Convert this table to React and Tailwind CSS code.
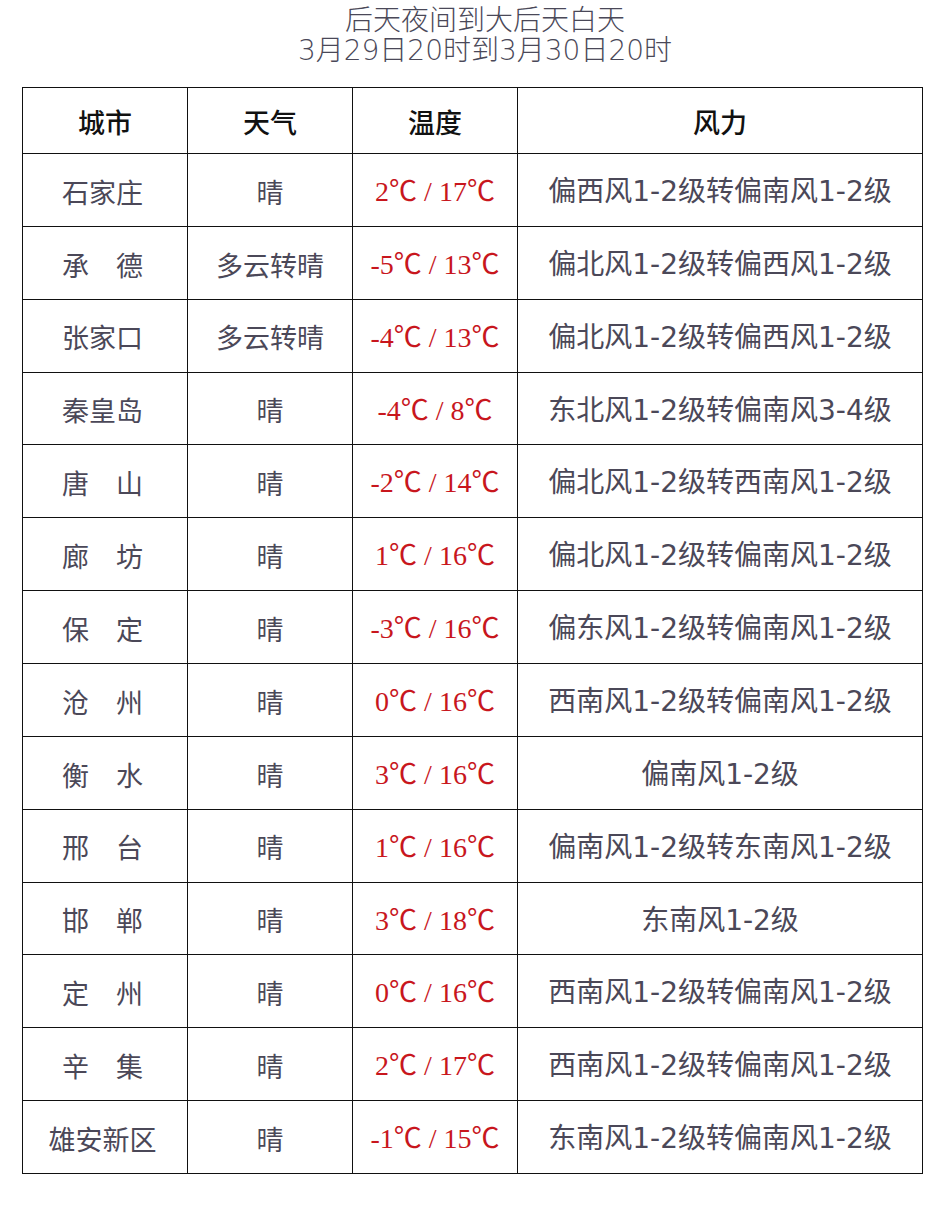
import React from 'react';

const rows = [
  { city: '石家庄', weather: '晴', temp: '2℃ / 17℃', wind: '偏西风1-2级转偏南风1-2级' },
  { city: '承　德', weather: '多云转晴', temp: '-5℃ / 13℃', wind: '偏北风1-2级转偏西风1-2级' },
  { city: '张家口', weather: '多云转晴', temp: '-4℃ / 13℃', wind: '偏北风1-2级转偏西风1-2级' },
  { city: '秦皇岛', weather: '晴', temp: '-4℃ / 8℃', wind: '东北风1-2级转偏南风3-4级' },
  { city: '唐　山', weather: '晴', temp: '-2℃ / 14℃', wind: '偏北风1-2级转西南风1-2级' },
  { city: '廊　坊', weather: '晴', temp: '1℃ / 16℃', wind: '偏北风1-2级转偏南风1-2级' },
  { city: '保　定', weather: '晴', temp: '-3℃ / 16℃', wind: '偏东风1-2级转偏南风1-2级' },
  { city: '沧　州', weather: '晴', temp: '0℃ / 16℃', wind: '西南风1-2级转偏南风1-2级' },
  { city: '衡　水', weather: '晴', temp: '3℃ / 16℃', wind: '偏南风1-2级' },
  { city: '邢　台', weather: '晴', temp: '1℃ / 16℃', wind: '偏南风1-2级转东南风1-2级' },
  { city: '邯　郸', weather: '晴', temp: '3℃ / 18℃', wind: '东南风1-2级' },
  { city: '定　州', weather: '晴', temp: '0℃ / 16℃', wind: '西南风1-2级转偏南风1-2级' },
  { city: '辛　集', weather: '晴', temp: '2℃ / 17℃', wind: '西南风1-2级转偏南风1-2级' },
  { city: '雄安新区', weather: '晴', temp: '-1℃ / 15℃', wind: '东南风1-2级转偏南风1-2级' },
];

const cjk = "font-['Noto_Sans_CJK_SC',sans-serif]";
const mixed = "font-['DejaVu_Sans','Noto_Sans_CJK_SC',sans-serif]";
const serif = "font-['Liberation_Serif','Noto_Sans_CJK_SC',serif]";

const cell = 'border border-[#111] text-center align-middle p-0 pt-[4px]';

export default function App() {
  return (
    <div className="w-[942px] bg-white pb-[44px]">
      <div className={`pt-[6px] text-center text-[28px] leading-[30px] font-light text-[#4a4858] ${mixed}`}>
        <div className="pl-[28px]">后天夜间到大后天白天</div>
        <div className="pl-[28px]">3月29日20时到3月30日20时</div>
      </div>

      <table className="ml-[22px] mt-[21px] w-[900px] border-collapse table-fixed">
        <colgroup>
          <col className="w-[165px]" />
          <col className="w-[165px]" />
          <col className="w-[165px]" />
          <col className="w-[405px]" />
        </colgroup>
        <thead>
          <tr className="h-[66px]">
            {['城市', '天气', '温度', '风力'].map((h) => (
              <th key={h} className={`${cell} ${cjk} text-[27px] font-medium text-[#111]`}>
                {h}
              </th>
            ))}
          </tr>
        </thead>
        <tbody>
          {rows.map((r) => (
            <tr key={r.city} className="h-[72.86px]">
              <td className={`${cell} ${cjk} pr-[5px] text-[27px] text-[#4b4858] whitespace-nowrap`}>{r.city}</td>
              <td className={`${cell} ${cjk} text-[27px] text-[#4b4858]`}>{r.weather}</td>
              <td className={`${cell} ${serif} text-[28px] text-[#c8161d] whitespace-nowrap`}>{r.temp}</td>
              <td className={`${cell} ${mixed} text-[28px] text-[#4b4858] whitespace-nowrap`}>{r.wind}</td>
            </tr>
          ))}
        </tbody>
      </table>
    </div>
  );
}
